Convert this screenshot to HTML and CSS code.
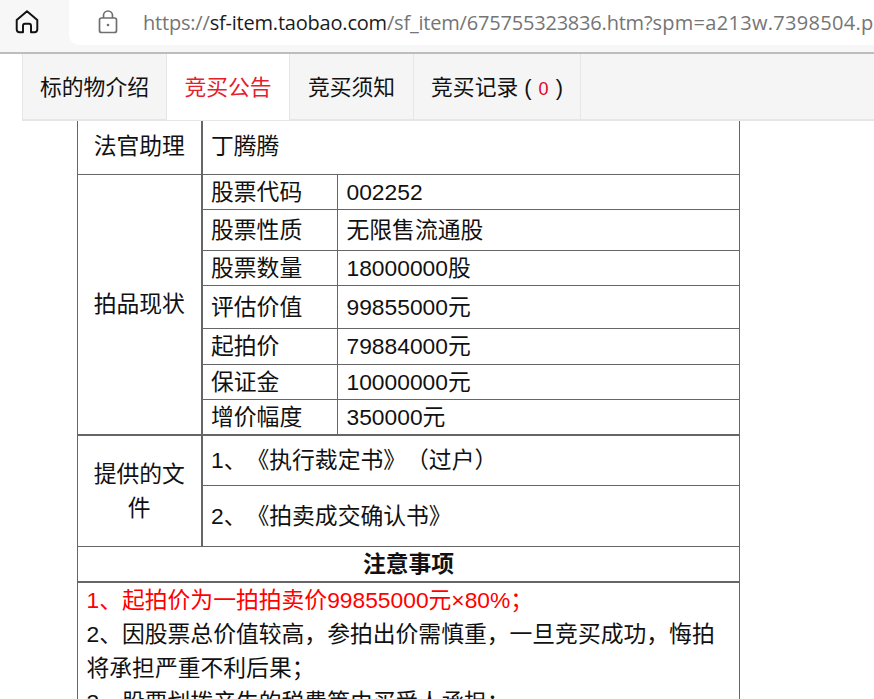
FILE: index.html
```html
<!DOCTYPE html>
<html lang="zh">
<head>
<meta charset="utf-8">
<title>竞买公告</title>
<link rel="stylesheet" href="styles.css">
</head>
<body>
<header class="toolbar">
  <button class="home" aria-label="主页">
    <svg width="26" height="26" viewBox="0 0 24 24" fill="none" stroke="#111" stroke-width="1.8" stroke-linejoin="round" stroke-linecap="round"><path d="M2.5 19V10.2L12 2l9.500 8.200V19a2.600 2.600 0 0 1-2.600 2.500h-3.200V15.500a1.800 1.800 0 0 0-1.800-1.800h-3.800a1.800 1.800 0 0 0-1.800 1.800v6H5.100A2.600 2.600 0 0 1 2.500 19z"/></svg>
  </button>
  <div class="address">
    <svg class="lock" width="20" height="24" viewBox="0 0 20 24" fill="none" stroke="#6f6f6f" stroke-width="1.700"><rect x="1.500" y="8" width="17" height="14.500" rx="2"/><path d="M5.500 8V5.500a4.500 4.500 0 0 1 9 0V8"/><circle cx="10" cy="15" r="1.300" fill="#6f6f6f" stroke="none"/></svg>
    <span class="url"><span class="dim">https://</span>sf-item.taobao.com<span class="dim">/sf_item/675755323836.htm?<span class="query">spm=a213w.7398504.p</span></span></span>
  </div>
</header>
<main class="page">
  <nav class="tabs">
    <a class="tab t1">标的物介绍</a>
    <a class="tab t2 active">竞买公告</a>
    <a class="tab t3">竞买须知</a>
    <a class="tab t4"><span>竞买记录 ( <em>0</em> )</span></a>
  </nav>
  <table class="notice">
    <colgroup><col class="c1"><col class="c2"><col class="c3"></colgroup>
    <tr class="r53 first"><td class="label thick-r">法官助理</td><td colspan="2">丁腾腾</td></tr>
    <tr class="r35"><td class="label thick-r" rowspan="7">拍品现状</td><td>股票代码</td><td>002252</td></tr>
    <tr class="r41"><td>股票性质</td><td>无限售流通股</td></tr>
    <tr class="r35"><td>股票数量</td><td>18000000股</td></tr>
    <tr class="r43"><td>评估价值</td><td>99855000元</td></tr>
    <tr class="r36"><td>起拍价</td><td>79884000元</td></tr>
    <tr class="r35"><td>保证金</td><td>10000000元</td></tr>
    <tr class="r35"><td>增价幅度</td><td>350000元</td></tr>
    <tr class="r51 thick-t"><td class="label thick-r" rowspan="2">提供的文件</td><td colspan="2">1、《执行裁定书》（过户）</td></tr>
    <tr class="r61"><td colspan="2">2、《拍卖成交确认书》</td></tr>
    <tr class="r35"><th colspan="3">注意事项</th></tr>
    <tr class="thick-t">
      <td colspan="3" class="terms">
        <p class="warn">1、起拍价为一拍拍卖价99855000元×80%；</p>
        <p>2、因股票总价值较高，参拍出价需慎重，一旦竞买成功，悔拍将承担严重不利后果；</p>
        <p>3、股票划拨产生的税费等由买受人承担；</p>
      </td>
    </tr>
  </table>
</main>
</body>
</html>
```

FILE: styles.css
```css
* { box-sizing: border-box; }
html, body { margin: 0; height: 699px; overflow: hidden; background: #fff; }
body { font-family: "Liberation Sans", "Noto Sans CJK SC", sans-serif; color: #111; text-spacing-trim: space-all; }

.toolbar { display: flex; height: 54px; background: #f7f7f7; border-bottom: 2px solid #bdbdbd; }
.home { display: flex; align-items: flex-start; width: 69px; padding: 9px 0 0 14px; border: 0; background: none; }
.address { flex: 1; min-width: 0; height: 45px; display: flex; align-items: center; background: #fff; border-bottom-left-radius: 10px; padding: 0 0 0 29px; overflow: hidden; }
.lock { flex: none; margin-top: -1px; }
.url { margin-left: 25px; font: 20px/43px "Open Sans", sans-serif; color: #1b1b1b; white-space: nowrap; letter-spacing: -0.2px; }
.dim { color: #757575; }
.query { letter-spacing: 0.3px; }

.page { padding-left: 22px; }
.tabs { display: flex; height: 67px; background: #f5f5f5; border-left: 1px solid #e6e6e6; border-bottom: 2px solid #e6e6e6; }
.tab { display: flex; align-items: center; justify-content: center; height: 65px; padding-bottom: 2px; font-size: 21.8px; color: #111; border-right: 1px solid #e6e6e6; }
.tab em { font-style: normal; font-size: 18px; color: #e4002b; margin: 0 1px; }
.t1 { width: 144px; }
.t2 { width: 123px; }
.t3 { width: 124px; }
.t4 { width: 167px; }
.active { background: #fff; color: #e4202b; height: 66px; padding-bottom: 3px; margin-bottom: -1px; }

.notice { margin: 0 0 0 55px; width: 662px; table-layout: fixed; border-collapse: collapse; font-size: 22.8px; line-height: 34px; color: #111; }
.c1 { width: 124px; }
.c2 { width: 136px; }
.c3 { width: 402px; }
.notice td, .notice th { border: 1px solid #666; padding: 0 8.5px; vertical-align: middle; text-align: left; }
.notice th { text-align: center; font-weight: 700; }
.notice .label { text-align: center; padding: 0 15px; }
.notice .thick-r { border-right-width: 2px; }
.notice .thick-t td { border-top-width: 2px; }
.notice .first td { border-top: 0; padding-bottom: 2px; }
.r53 { height: 53px; }
.r35 { height: 35px; }
.r36 { height: 36px; }
.r41 { height: 41px; }
.r43 { height: 43px; }
.r51 { height: 51px; }
.r61 { height: 61px; }
.terms p { margin: 0; }
.warn { color: #f00; }
```
